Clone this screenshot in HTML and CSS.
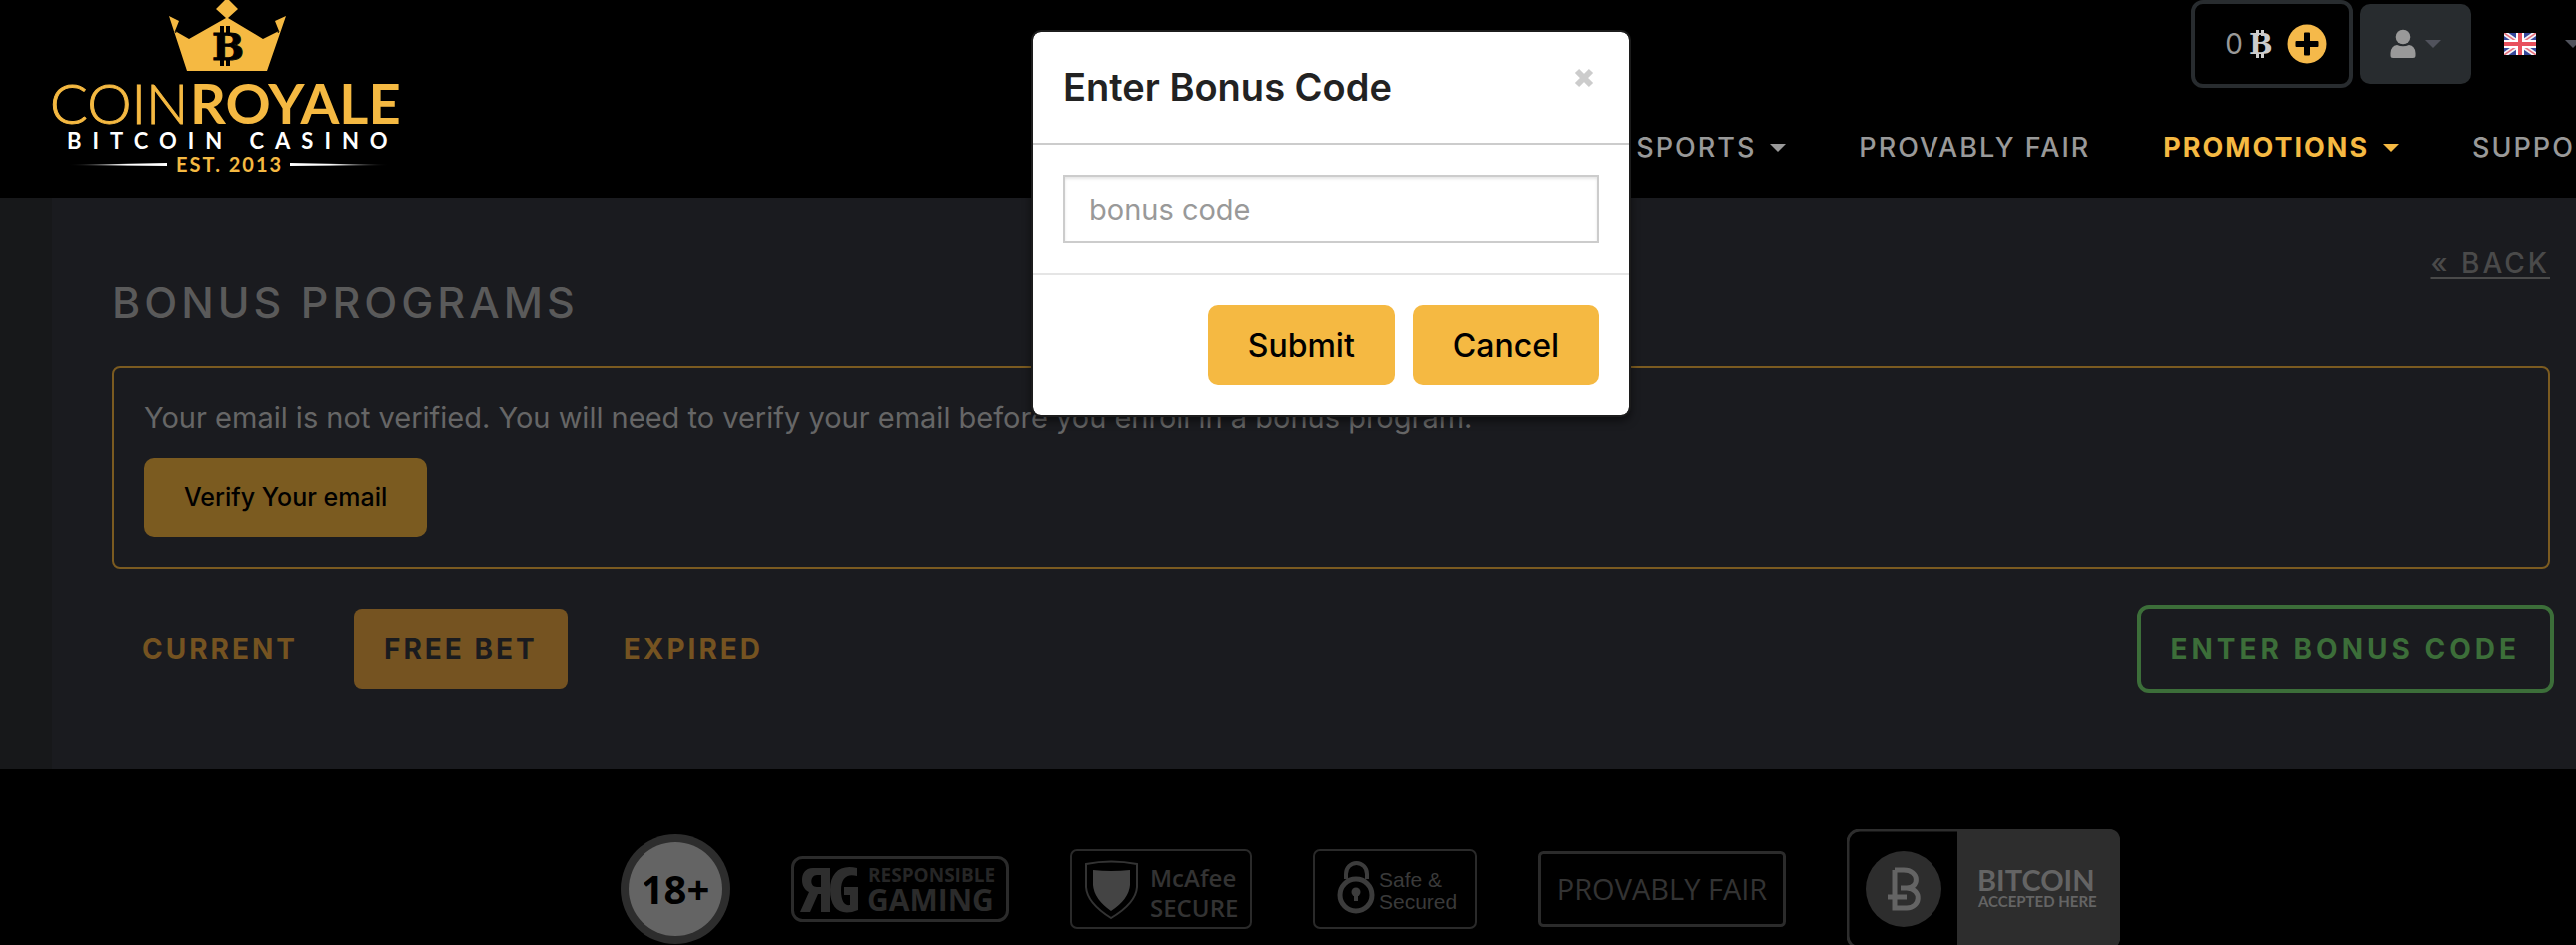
FILE: index.html
```html
<!DOCTYPE html>
<html lang="en">
    <head>
        <meta charset="UTF-8">
        <meta name="viewport" content="width=device-width, initial-scale=1.0">
        <title>Bonus Programs</title>
        <link rel="stylesheet" href="styles.css">
    </head>
    <body>
        <div class="page">
            <header class="header">
                <a class="logo" href="#" aria-label="CoinRoyale Bitcoin Casino">
                    <svg width="360" height="180" viewBox="0 0 360 180">
                        <defs>
                            <linearGradient id="fadeleft"><stop offset="0" stop-color="#fff" stop-opacity="0"/><stop offset="0.6" stop-color="#fff"/></linearGradient>
                            <linearGradient id="faderight"><stop offset="0.4" stop-color="#fff"/><stop offset="1" stop-color="#fff" stop-opacity="0"/></linearGradient>
                        </defs>
                        <g fill="#f5b942">
                            <path d="M175 -2L186 9L176 18L211 39L227 31L223 21L234 16L215 71H135L117 16L127 21L123 31L137 39L174 18L164 9Z"/>
                        </g>
                        <path d="M123 31L124 33M227 31L226 33" stroke="#000" stroke-width="1"/>
                        <text class="logo-b" x="160" y="60">B</text>
                        <path d="M168 26h4v7h-4zM174 26h4v7h-4zM168 59h4v7h-4zM174 59h4v7h-4z" fill="#000"/>
                        <text class="logo-coin" x="-2" y="124">COIN</text>
                        <text class="logo-royale" x="138" y="124">ROYALE</text>
                        <text class="logo-casino" x="15" y="149">BITCOIN CASINO</text>
                        <text class="logo-est" x="124" y="172">EST. 2013</text>
                        <path d="M16 165L115 163V166Z" fill="url(#fadeleft)"/>
                        <path d="M238 163L337 165L238 166Z" fill="url(#faderight)"/>
                    </svg>
                </a>
                <div class="header-right">
                    <div class="tools">
                        <button class="wallet" type="button" aria-label="Deposit">
                            <span>0</span>
                            <svg class="coin" width="24" height="30" viewBox="0 0 24 30">
                                <text class="coin-b" x="0" y="25">B</text>
                                <path d="M7 1h3v6H7zM12 1h3v6h-3zM7 24h3v5H7zM12 24h3v5h-3z" fill="#ccc"/>
                            </svg>
                            <svg class="plus" width="40" height="40" viewBox="0 0 40 40">
                                <circle cx="20" cy="20" r="19.5" fill="#f5b94a"/>
                                <path d="M18 8.500h4q1 0 1 1V17h7.500q1 0 1 1v4q0 1-1 1H23v7.500q0 1-1 1h-4q-1 0-1-1V23H9.500q-1 0-1-1v-4q0-1 1-1H17V9.500q0-1 1-1z" fill="#000"/>
                            </svg>
                        </button>
                        <button class="user" type="button" aria-label="Account">
                            <svg width="26" height="30" viewBox="0 0 26 30">
                                <circle cx="13" cy="8" r="7.300" fill="#999"/>
                                <path d="M7 16q6 2.600 12 0q6 .8 6.500 8v2.500q0 2.500-2.500 2.500H3q-2.500 0-2.500-2.500V24q.5-7.200 6.500-8z" fill="#999"/>
                            </svg>
                            <span class="caret"></span>
                        </button>
                        <button class="lang" type="button" aria-label="Language">
                            <svg width="32" height="22" viewBox="0 0 32 22">
                                <path d="M0 0h32v22H0z" fill="#35479c"/>
                                <path d="M0 0L32 22M32 0L0 22" stroke="#f4f4f8" stroke-width="5"/>
                                <path d="M0 0L32 22M32 0L0 22" stroke="#e8707c" stroke-width="1.500"/>
                                <path d="M16 0v22M0 11h32" stroke="#fff" stroke-width="8"/>
                                <path d="M16 0v22M0 11h32" stroke="#e8505c" stroke-width="4"/>
                            </svg>
                            <span class="caret"></span>
                        </button>
                    </div>
                    <nav class="nav">
                        <a href="#">SPORTS<span class="caret"></span></a>
                        <a href="#">PROVABLY FAIR</a>
                        <a class="active" href="#">PROMOTIONS<span class="caret"></span></a>
                        <a href="#">SUPPORT<span class="caret"></span></a>
                    </nav>
                </div>
            </header>

            <main class="main">
                <div class="content">
                    <div class="heading">
                        <h1>BONUS PROGRAMS</h1>
                        <a class="back" href="#">« BACK</a>
                    </div>
                    <div class="notice">
                        <p>Your email is not verified. You will need to verify your email before you enroll in a bonus program.</p>
                        <button class="verify" type="button">Verify Your email</button>
                    </div>
                    <div class="bonusbar">
                        <div class="tabs">
                            <button class="tab" type="button">CURRENT</button>
                            <button class="tab selected" type="button">FREE BET</button>
                            <button class="tab" type="button">EXPIRED</button>
                        </div>
                        <button class="enter" type="button">ENTER BONUS CODE</button>
                    </div>
                </div>
            </main>

            <footer class="footer">
                <!-- 18+ -->
                <svg width="110" height="110" viewBox="0 0 110 110">
                    <circle cx="55" cy="55" r="55" fill="#2d2d2d"/>
                    <circle cx="55" cy="55" r="47" fill="#646464"/>
                    <text class="age" x="55" y="70">18+</text>
                </svg>
                <!-- responsible gaming -->
                <svg width="218" height="66" viewBox="0 0 218 66">
                    <rect x="1.500" y="1.500" width="215" height="63" rx="10" fill="none" stroke="#2b2b2b" stroke-width="3"/>
                    <path d="M38 12H22C14 12 11 18 11 24C11 30 14 34 18 36L9 56H19L27 38H30V56H39V12ZM30 31H26C18 31 19 19 26 19H30Z" fill="#2e2e2e"/>
                    <path d="M66 12V20C56 17 50 22 50 34C50 46 54 50 59 49V39H53V31H67V54C50 61 39 53 39 34C39 16 50 8 66 12Z" fill="#2e2e2e"/>
                    <text class="rg-top" x="77" y="26">RESPONSIBLE</text>
                    <text class="rg-bottom" x="76" y="55">GAMING</text>
                </svg>
                <!-- mcafee -->
                <svg width="182" height="80" viewBox="0 0 182 80">
                    <rect x="1" y="1" width="180" height="78" rx="6" fill="none" stroke="#2a2a2a" stroke-width="2"/>
                    <path d="M16 15Q41 10 67 15V38Q66 54 41 69Q17 54 16 38Z" fill="none" stroke="#333" stroke-width="2"/>
                    <path d="M23 21Q41 23 60 21V36Q59 50 41 62Q24 50 23 36Z" fill="#444"/>
                    <text class="mc" x="80" y="38">McAfee</text>
                    <text class="mc" x="80" y="68">SECURE</text>
                </svg>
                <!-- safe and secured -->
                <svg width="164" height="80" viewBox="0 0 164 80">
                    <rect x="1" y="1" width="162" height="78" rx="6" fill="none" stroke="#2a2a2a" stroke-width="2"/>
                    <path d="M33 30V25A10.500 11 0 0 1 54 25V30" fill="none" stroke="#3c3c3c" stroke-width="4"/>
                    <circle cx="43" cy="46" r="16" fill="none" stroke="#3c3c3c" stroke-width="5"/>
                    <circle cx="43" cy="43" r="4.500" fill="#3c3c3c"/>
                    <path d="M43 44v8" stroke="#3c3c3c" stroke-width="4"/>
                    <text class="safe" x="66" y="38">Safe &amp;</text>
                    <text class="safe" x="66" y="60">Secured</text>
                </svg>
                <!-- provably fair -->
                <svg width="248" height="76" viewBox="0 0 248 76">
                    <rect x="1.500" y="1.500" width="245" height="73" rx="4" fill="none" stroke="#2b2b2b" stroke-width="3"/>
                    <text class="fair" x="124" y="49">PROVABLY FAIR</text>
                </svg>
                <!-- bitcoin accepted here -->
                <svg width="274" height="120" viewBox="0 0 274 120">
                    <rect x="1" y="1" width="272" height="118" rx="12" fill="none" stroke="#2d2d2d" stroke-width="3"/>
                    <path d="M111 0H262Q274 0 274 12V108Q274 120 262 120H111Z" fill="#2d2d2d"/>
                    <circle cx="57" cy="60" r="38" fill="#2d2d2d"/>
                    <path d="M48 41H57C73 41 73 59 60 59H54M60 59C76 60 74 79 60 79H48V41M41 68H60" fill="none" stroke="#646464" stroke-width="5"/>
                    <text class="btc-top" x="131" y="62">BITCOIN</text>
                    <text class="btc-bottom" x="132" y="78">ACCEPTED HERE</text>
                </svg>
            </footer>

            <form class="modal" role="dialog" aria-labelledby="modal-title">
                <div class="modal-header">
                    <h2 id="modal-title">Enter Bonus Code</h2>
                    <button class="close" type="button" aria-label="Close">
                        <svg width="20" height="20" viewBox="0 0 20 20"><path d="M3 3L17 17M17 3L3 17" stroke="#ccc" stroke-width="6"/></svg>
                    </button>
                </div>
                <div class="modal-body">
                    <input type="text" name="bonus_code" placeholder="bonus code" aria-label="bonus code">
                </div>
                <div class="modal-footer">
                    <button class="btn" type="submit">Submit</button>
                    <button class="btn" type="button">Cancel</button>
                </div>
            </form>
        </div>
    </body>
</html>
```

FILE: styles.css
```css
* {
    box-sizing: border-box;
}

body {
    margin: 0;
    background-color: #000;
    color: #666;
    font-family: Inter, "Liberation Sans", sans-serif;
    font-size: 28px;
    overflow: hidden;
}

/* the page is a little wider than the window */
.page {
    position: relative;
    width: calc(100% + 86px);
}

h1,
h2,
p {
    margin: 0;
}

a {
    color: inherit;
    text-decoration: none;
}

button {
    border: none;
    background: none;
    padding: 0;
    color: inherit;
    font-family: inherit;
    cursor: pointer;
}

svg {
    display: block;
    flex: none;
}

.caret {
    border: 8px solid transparent;
    border-top-color: currentColor;
    border-bottom: none;
}

/* header */
.header {
    display: flex;
    justify-content: space-between;
    height: 198px;
    padding-left: 52px;
}

.logo svg,
.coin {
    overflow: visible;
}

.logo-b {
    font: bold 38px "DejaVu Serif", serif;
    fill: #000;
    stroke: #000;
    stroke-width: 1px;
}

.logo-coin {
    font: 300 56px Lato, sans-serif;
    fill: #f5b942;
    stroke: #f5b942;
    stroke-width: 1px;
}

.logo-royale {
    font: 700 56px Lato, sans-serif;
    fill: #f5b942;
}

.logo-casino {
    font: 700 22px Lato, sans-serif;
    letter-spacing: 11px;
    fill: #fff;
}

.logo-est {
    font: 700 20px Lato, sans-serif;
    letter-spacing: 2px;
    fill: #f5b942;
}

.tools {
    display: flex;
    justify-content: flex-end;
    align-items: center;
    height: 88px;
    padding-right: 48px;
}

.wallet {
    display: flex;
    align-items: center;
    height: 88px;
    padding: 0 22px 0 30px;
    border: 4px solid #282c2f;
    border-radius: 12px;
    color: #999;
    font-size: 28px;
}

.coin {
    margin-left: 6px;
}

.coin-b {
    font: bold 28px "DejaVu Serif", serif;
    fill: #ccc;
}

.plus {
    margin-left: 14px;
}

.user {
    display: flex;
    align-items: center;
    gap: 9px;
    height: 80px;
    margin-left: 7px;
    padding: 0 30px;
    border-radius: 10px;
    background-color: #282c2f;
    color: #50525c;
}

.lang {
    display: flex;
    align-items: center;
    gap: 29px;
    padding: 0 33px;
    color: #50525c;
}

.nav {
    display: flex;
    justify-content: flex-end;
    gap: 73px;
    margin-top: 40px;
    padding-right: 18px;
    color: #999;
    font-size: 27px;
    font-weight: 500;
    line-height: 40px;
    letter-spacing: 2px;
}

.nav a {
    display: flex;
    align-items: center;
    gap: 14px;
}

.nav .active {
    color: #f5b942;
    font-weight: 700;
}

/* content */
.main {
    padding: 0 52px;
    background-color: #17181a;
}

.content {
    padding: 45px 60px 76px;
    background-color: #1a1b1f;
}

.heading {
    display: flex;
    justify-content: space-between;
    align-items: flex-start;
}

h1 {
    margin: 29px 0 34px;
    color: #5a5a5a;
    font-size: 43px;
    font-weight: 500;
    line-height: 60px;
    letter-spacing: 4px;
}

.back {
    color: #4a4a4a;
    font-weight: 500;
    line-height: 40px;
    letter-spacing: 3px;
    text-decoration: underline;
    text-decoration-thickness: 2px;
    text-underline-offset: 4px;
}

.notice {
    padding: 30px;
    border: 2px solid #7b5b20;
    border-radius: 8px;
}

.notice p {
    font-size: 29px;
    line-height: 40px;
}

.verify {
    display: block;
    height: 80px;
    margin-top: 20px;
    padding: 0 40px;
    border-radius: 10px;
    background-color: #7b5b20;
    color: #000;
    font-size: 25px;
    font-weight: 500;
}

.bonusbar {
    display: flex;
    justify-content: space-between;
    align-items: center;
    margin: 36px -4px 0 0;
}

.tabs {
    display: flex;
    gap: 26px;
}

.tab,
.enter {
    padding: 0 30px;
    font-size: 28px;
    font-weight: 700;
    letter-spacing: 4px;
}

.tab {
    height: 80px;
    border-radius: 8px;
    color: #755321;
    letter-spacing: 3px;
}

.tab.selected {
    background-color: #755321;
    color: #1a1b1f;
}

.enter {
    height: 88px;
    border: 4px solid #3c6e39;
    border-radius: 12px;
    color: #3c6e39;
}

/* footer */
.footer {
    display: flex;
    justify-content: center;
    align-items: center;
    gap: 61px;
    padding: 60px 0 60px 78px;
}

.age {
    font: 700 40px "Noto Sans", sans-serif;
    text-anchor: middle;
    fill: #000;
}

.rg-top {
    font: 700 19px "Open Sans", sans-serif;
    fill: #262626;
}

.rg-bottom {
    font: 700 30px "Open Sans", sans-serif;
    fill: #2b2b2b;
}

.mc {
    font: 600 24px "Open Sans", sans-serif;
    fill: #333;
}

.safe {
    font: 21px "Liberation Sans", sans-serif;
    fill: #3a3a3a;
}

.fair {
    font: 29px "Open Sans", sans-serif;
    text-anchor: middle;
    fill: #333;
}

.btc-top {
    font: 700 29px Lato, sans-serif;
    fill: #646464;
}

.btc-bottom {
    font: 700 15px Lato, sans-serif;
    fill: #646464;
}

/* bonus code dialog */
.modal {
    position: absolute;
    top: 30px;
    left: 50%;
    width: 600px;
    margin-left: -300px;
    border: 2px solid #1c1c1c;
    border-radius: 10px;
    background-color: #fff;
    background-clip: padding-box;
    box-shadow: 0 4px 8px rgba(0, 0, 0, 0.5);
}

.modal-header {
    display: flex;
    justify-content: space-between;
    align-items: flex-start;
    padding: 30px;
    border-bottom: 2px solid #ccc;
}

h2 {
    color: #222;
    font-size: 38px;
    font-weight: 600;
    line-height: 51px;
}

.close {
    padding: 6px 5px;
}

.modal-body {
    padding: 30px;
}

input[type=text] {
    display: block;
    width: 100%;
    height: 68px;
    padding: 0 24px;
    border: 2px solid #ccc;
    border-radius: 0;
    background-color: #fff;
    box-shadow: inset 0 2px 3px rgba(0, 0, 0, 0.1);
    color: #555;
    font-family: inherit;
    font-size: 29px;
}

input::placeholder {
    color: #999;
}

.modal-footer {
    display: flex;
    justify-content: flex-end;
    gap: 18px;
    padding: 30px;
    border-top: 2px solid #e5e5e5;
}

.btn {
    height: 80px;
    padding: 0 40px;
    border-radius: 10px;
    background-color: #f5b942;
    color: #000;
    font-size: 32px;
    font-weight: 500;
}
```
